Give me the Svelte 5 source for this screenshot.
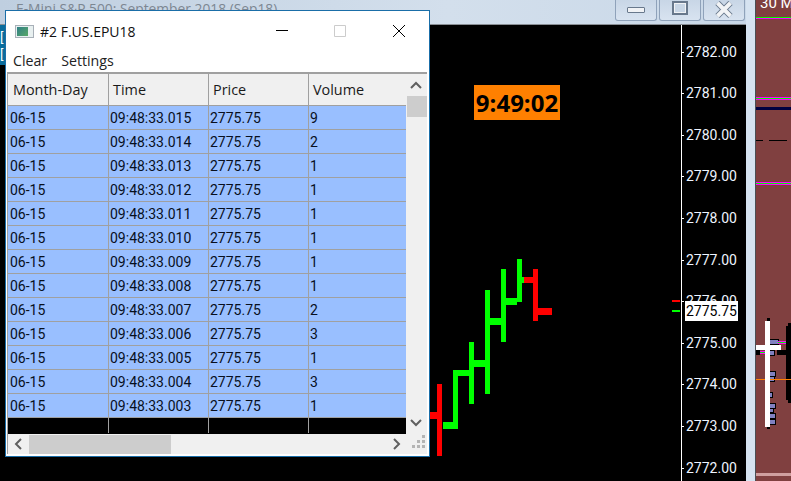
<script lang="ts">
	const volumes = [9, 2, 1, 1, 1, 1, 1, 1, 2, 3, 1, 3, 1];
	const trades = volumes.map((volume, i) => ({
		day: '06-15',
		time: `09:48:33.${String(15 - i).padStart(3, '0')}`,
		price: '2775.75',
		volume
	}));
	const columns = ['Month-Day', 'Time', 'Price', 'Volume'];

	const axis = [2782, 2781, 2780, 2779, 2778, 2777, 2776, 2775, 2774, 2773, 2772].map((price, i) => ({
		label: price.toFixed(2),
		y: 51.5 + i * 41.6
	}));

	// x, y, width, height of each chart bar piece
	const red = [
		[430, 412, 8, 7], [437, 384, 5, 72],
		[523, 277, 11, 6], [533, 269, 5, 52], [538, 308, 14, 7]
	];
	const green = [
		[443, 422, 11, 7], [453, 370, 5, 59], [458, 370, 11, 6],
		[469, 342, 5, 62], [474, 360, 11, 7],
		[485, 290, 5, 104], [490, 318, 11, 7],
		[501, 269, 5, 73], [506, 298, 11, 7],
		[517, 259, 5, 43], [522, 277, 2, 6]
	];
	const profile = [
		[770, 339, 8, 5], [770, 350, 4, 5], [770, 371, 5, 5], [770, 376, 4, 5],
		[770, 392, 2, 5], [770, 403, 5, 5], [770, 408, 3, 4], [770, 413, 5, 5], [770, 419, 5, 5]
	];
</script>

<div class="desktop">
	<div class="chart-window">
		<div class="caption">
			<span class="caption-title">E-Mini S&amp;P 500: September 2018 (Sep18)</span>
			<div class="caption-buttons">
				<button class="cap-btn" aria-label="Minimize"><span class="cap-min"></span></button>
				<button class="cap-btn" aria-label="Maximize"><span class="cap-max"></span></button>
				<button class="cap-btn" aria-label="Close">
					<svg width="20" height="18" viewBox="0 0 20 18">
						<path d="M3.5 2 L16.5 15 M16.5 2 L3.5 15" stroke="#68788c" stroke-width="6" />
						<path d="M3.5 2 L16.5 15 M16.5 2 L3.5 15" stroke="#f2f4f6" stroke-width="4" />
					</svg>
				</button>
			</div>
		</div>
		<div class="chart-area">
			<div class="side-tab"><span>[</span><span>[</span></div>
			<div class="clock">9:49:02</div>
			<svg class="plot" width="746" height="456" viewBox="0 25 746 456">
				{#each red as [x, y, w, h]}
					<rect {x} {y} width={w} height={h} fill="#ff0000" />
				{/each}
				{#each green as [x, y, w, h]}
					<rect {x} {y} width={w} height={h} fill="#00ff00" />
				{/each}
				<rect x="681" y="25" width="1" height="456" fill="#fff" />
				{#each axis as tick}
					<rect x="682" y={Math.round(tick.y)} width="2" height="1" fill="#fff" />
					<text class="axis-label" x="686" y={tick.y + 5}>{tick.label}</text>
				{/each}
				<rect x="672" y="300" width="8" height="2" fill="#ff0000" />
				<rect x="672" y="310" width="8" height="2" fill="#00ff00" />
				<rect x="685" y="301" width="53" height="20" fill="#fff" />
				<text class="axis-label last" x="686" y="316">2775.75</text>
			</svg>
		</div>
	</div>

	<div class="edge"></div>

	<div class="side-panel">
		<span class="panel-title">30 M</span>
		<svg class="panel-art" width="35" height="481" viewBox="756 0 35 481">
			<rect x="756" y="18" width="35" height="1" fill="#ff00ff" />
			<rect x="756" y="17" width="35" height="1" fill="#00ff00" />
			<rect x="756" y="97" width="35" height="1" fill="#ff00ff" />
			<rect x="756" y="98" width="35" height="1" fill="#00ff00" />
			<rect x="756" y="99" width="35" height="1" fill="#ff00ff" />
			<rect x="756" y="107" width="35" height="3" fill="#000040" />
			<rect x="756" y="140" width="7" height="1" fill="#000" />
			<rect x="769" y="140" width="18" height="1" fill="#000" />
			<rect x="756" y="182" width="35" height="1" fill="#ff00ff" />
			<rect x="756" y="183" width="35" height="1" fill="#00ff00" />
			<rect x="756" y="184" width="35" height="1" fill="#ff00ff" />
			<rect x="756" y="473" width="35" height="3" fill="#cf9f9f" />

			<rect x="786" y="326" width="5" height="74" fill="#000" />
			<rect x="788" y="323" width="3" height="80" fill="#000" />
			<rect x="777" y="350" width="9" height="5" fill="#000" />
			<rect x="756" y="350" width="4" height="5" fill="#000" />
			<rect x="767" y="318" width="3" height="111" fill="#000" />
			{#each profile as [x, y, w, h]}
				<rect x={x - 0.5} y={y + 0.5} width={w + 1} height={h} fill="#8080c0" stroke="#000" />
			{/each}
			<rect x="778" y="341" width="8" height="1" fill="#ff00ff" />
			<rect x="778" y="342" width="8" height="1" fill="#00ff00" />
			<rect x="778" y="343" width="8" height="1" fill="#ff00ff" />
			<rect x="760" y="351" width="5" height="1" fill="#ff00ff" />
			<rect x="760" y="352" width="5" height="1" fill="#00ff00" />
			<rect x="760" y="353" width="5" height="1" fill="#ff00ff" />
			<rect x="756" y="379" width="35" height="1" fill="#ff8000" />
			<rect x="765" y="321" width="5" height="106" fill="#fff" />
			<rect x="756" y="345" width="25" height="5" fill="#fff" />
		</svg>
	</div>

	<div class="popup">
		<div class="popup-title">
			<span class="app-icon"><span class="app-icon-fill"></span></span>
			<span class="popup-name">#2 F.US.EPU18</span>
			<svg class="win-controls" width="129" height="12" viewBox="0 0 129 12">
				<path d="M0 5.5 H12" stroke="#000" fill="none" />
				<path d="M58.5 0.5 H69.5 V11.5 H58.5 Z" stroke="#cccccc" fill="none" />
				<path d="M117 0 L129 12 M129 0 L117 12" stroke="#000" fill="none" />
			</svg>
		</div>
		<div class="menu">
			<span>Clear</span>
			<span>Settings</span>
		</div>
		<div class="body">
			<div class="table-row-area">
				<div class="table">
					<div class="row head">
						{#each columns as column}
							<div class="cell">{column}</div>
						{/each}
					</div>
					{#each trades as trade}
						<div class="row">
							<div class="cell">{trade.day}</div>
							<div class="cell">{trade.time}</div>
							<div class="cell">{trade.price}</div>
							<div class="cell">{trade.volume}</div>
						</div>
					{/each}
					<div class="row filler">
						<div class="cell"></div>
						<div class="cell"></div>
						<div class="cell"></div>
						<div class="cell"></div>
					</div>
				</div>
				<div class="vscroll">
					<svg width="20" height="22" viewBox="0 0 20 22">
						<path d="M5 14 L10 9 L15 14" stroke="#606060" stroke-width="2" fill="none" />
					</svg>
					<div class="vthumb"></div>
					<svg class="bottom-arrow" width="20" height="22" viewBox="0 0 20 22">
						<path d="M5 8 L10 13 L15 8" stroke="#606060" stroke-width="2" fill="none" />
					</svg>
				</div>
			</div>
			<div class="hscroll">
				<svg class="harrow" width="21" height="20" viewBox="0 0 21 20">
					<path d="M13 5 L8 10 L13 15" stroke="#606060" stroke-width="2" fill="none" />
				</svg>
				<div class="hthumb"></div>
				<svg class="harrow right" width="20" height="20" viewBox="0 0 20 20">
					<path d="M7 5 L12 10 L7 15" stroke="#606060" stroke-width="2" fill="none" />
				</svg>
				<svg class="grip" width="20" height="20" viewBox="0 0 20 20" fill="#b4b4b4">
					<rect x="14" y="1" width="3" height="3" />
					<rect x="9" y="6" width="3" height="3" />
					<rect x="14" y="6" width="3" height="3" />
					<rect x="4" y="11" width="3" height="3" />
					<rect x="9" y="11" width="3" height="3" />
					<rect x="14" y="11" width="3" height="3" />
				</svg>
			</div>
		</div>
	</div>
</div>

<style>
	:global(body) {
		margin: 0;
		background: #000;
	}

	.desktop {
		position: relative;
		display: flex;
		width: 791px;
		height: 481px;
		overflow: hidden;
		font-family: Roboto, "Open Sans", sans-serif;
		font-size: 14px;
	}

	.chart-window {
		display: flex;
		flex-direction: column;
		width: 746px;
		flex: none;
	}

	.caption {
		display: flex;
		justify-content: space-between;
		height: 25px;
		flex: none;
		box-sizing: border-box;
		border-bottom: 1px solid #8a8f95;
		background: linear-gradient(90deg, #bfcfe0, #d3dfec 60%, #c9d8e8);
		overflow: hidden;
	}

	.caption-title {
		margin: 0 0 0 16px;
		font-family: "Open Sans", sans-serif;
		font-size: 13.8px;
		line-height: 18px;
		color: #7d8792;
		white-space: nowrap;
	}

	.caption-buttons {
		display: flex;
		gap: 2px;
		padding-right: 1px;
	}

	.cap-btn {
		display: flex;
		align-items: center;
		justify-content: center;
		width: 42px;
		height: 21px;
		padding: 0;
		border: 1px solid #8fa2ba;
		border-top: 0;
		border-radius: 0 0 3px 3px;
		background: linear-gradient(180deg, #c8d6e6, #d8e3f0);
	}

	.cap-min {
		width: 16px;
		height: 4px;
		border: 1px solid #68788c;
		border-radius: 1px;
		background: #f0f2f5;
	}

	.cap-max {
		width: 12px;
		height: 10px;
		border: 2px solid #68788c;
		outline: 1px solid #f0f2f5;
		outline-offset: -3px;
		background: #c8d6e6;
		margin-bottom: 4px;
	}

	.chart-area {
		position: relative;
		flex: 1;
		background: #000;
	}

	.plot {
		position: absolute;
		inset: 0;
	}

	.axis-label {
		font-size: 14px;
		fill: #eef4ff;
	}

	.axis-label.last {
		fill: #000;
	}

	.side-tab {
		position: absolute;
		top: 0;
		left: 0;
		display: flex;
		flex-direction: column;
		width: 5px;
		height: 40px;
		padding-top: 4px;
		box-sizing: border-box;
		background: #0a6c9c;
		color: #fff;
		font-size: 13px;
		line-height: 17px;
		overflow: hidden;
	}

	.clock {
		position: absolute;
		top: 60px;
		left: 474px;
		width: 86px;
		height: 35px;
		background: #ff8000;
		color: #000;
		font-family: "Open Sans", sans-serif;
		font-size: 24px;
		font-weight: 700;
		line-height: 35px;
		text-align: center;
	}

	.edge {
		width: 10px;
		flex: none;
		box-sizing: border-box;
		background: #d6e3f1;
		border-right: 1px solid #4a4f55;
	}

	.side-panel {
		position: relative;
		flex: 1;
		background: #804040;
		overflow: hidden;
	}

	.panel-title {
		position: absolute;
		top: -6px;
		left: 4px;
		color: #fff;
		font-size: 15px;
		line-height: 18px;
		white-space: nowrap;
	}

	.panel-art {
		position: absolute;
		inset: 0;
	}

	.popup {
		position: absolute;
		top: 10px;
		left: 5px;
		display: flex;
		flex-direction: column;
		width: 425px;
		height: 447px;
		box-sizing: border-box;
		border: 1px solid #1a6ea8;
		background: #fff;
		color: #000;
	}

	.popup-title {
		display: flex;
		align-items: center;
		height: 37px;
		flex: none;
		padding: 0 24px 0 9px;
	}

	.app-icon {
		display: block;
		width: 19px;
		height: 13px;
		box-sizing: border-box;
		border: 1px solid #a8b0b8;
		background: #e8f0f0;
		margin-top: 3px;
	}

	.app-icon-fill {
		display: block;
		width: 11px;
		height: 9px;
		margin: 1px;
		background: linear-gradient(135deg, #2f7f86, #58a868);
	}

	.popup-name {
		margin: 3px 0 0 6px;
		font-family: "Open Sans", sans-serif;
		font-size: 14px;
		color: #111;
	}

	.win-controls {
		margin: 3px 0 0 auto;
	}

	.menu {
		display: flex;
		gap: 14px;
		height: 24px;
		flex: none;
		align-items: center;
		padding-left: 7px;
		font-family: "Open Sans", sans-serif;
		font-size: 14.2px;
		color: #222;
	}

	.body {
		display: flex;
		flex-direction: column;
		flex: 1;
		margin-left: 1px;
		margin-right: 2px;
		margin-bottom: 2px;
		border-top: 2px solid #a0a0a0;
		border-left: 1px solid #a0a0a0;
		background: #f0f0f0;
	}

	.table-row-area {
		display: flex;
		flex: 1;
		min-height: 0;
	}

	.table {
		width: 398px;
		flex: none;
		background: #000;
	}

	.row {
		display: grid;
		grid-template-columns: 101px 100px 100px 97px;
		height: 24px;
		box-sizing: border-box;
		border-bottom: 1px solid #a0a0a0;
		background: #99bfff;
		color: #08101e;
		line-height: 25px;
	}

	.cell {
		padding-left: 1px;
		border-right: 1px solid #a0a0a0;
	}

	.cell:first-child {
		padding-left: 2px;
	}

	.cell:last-child {
		border-right: 0;
	}

	.head {
		height: 32px;
		background: #f0f0f0;
		color: #1a1a1a;
		line-height: 32px;
	}

	.head .cell {
		padding-left: 4px;
		font-family: "Open Sans", sans-serif;
		font-size: 14.4px;
	}

	.head .cell:first-child {
		padding-left: 5px;
	}

	.filler {
		height: 15px;
		border-bottom: 0;
		background: #000;
	}

	.vscroll {
		display: flex;
		flex-direction: column;
		flex: 1;
		background: #f0f0f0;
	}

	.vthumb {
		height: 21px;
		margin-left: 1px;
		background: #cdcdcd;
	}

	.bottom-arrow {
		margin-top: auto;
	}

	.hscroll {
		display: flex;
		align-items: center;
		height: 20px;
		flex: none;
		background: #f0f0f0;
	}

	.harrow {
		flex: none;
	}

	.harrow.right {
		margin-left: auto;
		margin-right: 0;
	}

	.hthumb {
		width: 142px;
		height: 19px;
		background: #cdcdcd;
	}

	.grip {
		flex: none;
		margin-right: -1px;
		margin-left: 1px;
	}
</style>
